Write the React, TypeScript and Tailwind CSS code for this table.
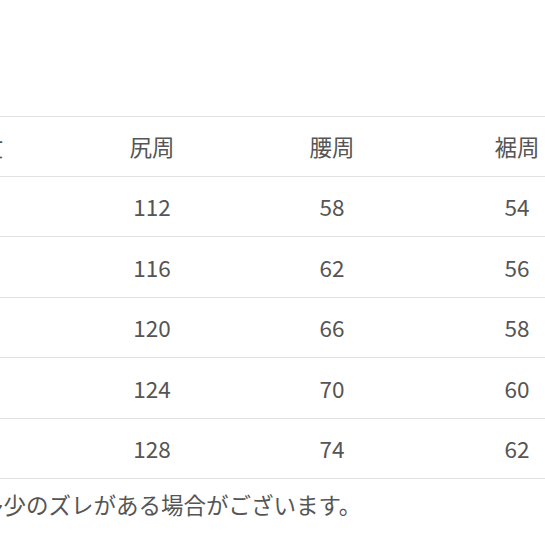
const font = { fontFamily: '"Noto Sans CJK JP", "Noto Sans", sans-serif' };

const rows = [
  ['63', '112', '58', '54'],
  ['64', '116', '62', '56'],
  ['65', '120', '66', '58'],
  ['66', '124', '70', '60'],
  ['67', '128', '74', '62'],
];

const colWidths = ['w-[162px]', 'w-[180px]', 'w-[180px]', 'w-[190px]'];

function Row({ cells, header }: { cells: string[]; header?: boolean }) {
  return (
    <div className={`flex h-[60.5px] items-center border-b border-[#e2e2e2] ${header ? 'border-t' : ''}`}>
      {cells.map((c, i) => (
        <div key={i} className={`${colWidths[i]} shrink-0 text-center`}>
          {c}
        </div>
      ))}
    </div>
  );
}

export default function App() {
  return (
    <div className="h-[545px] w-[545px] overflow-hidden bg-white text-[#555555]" style={font}>
      <div className="ml-[-100px] pt-[116px]">
        <div className="text-[22.5px] leading-none">
          <Row header cells={['着丈', '尻周', '腰周', '裾周']} />
          {rows.map((r) => (
            <Row key={r[1]} cells={r} />
          ))}
        </div>
        <p className="-ml-[9px] mt-[14px] whitespace-nowrap text-[22.5px] leading-none">※実寸は多少のズレがある場合がございます。</p>
      </div>
    </div>
  );
}
